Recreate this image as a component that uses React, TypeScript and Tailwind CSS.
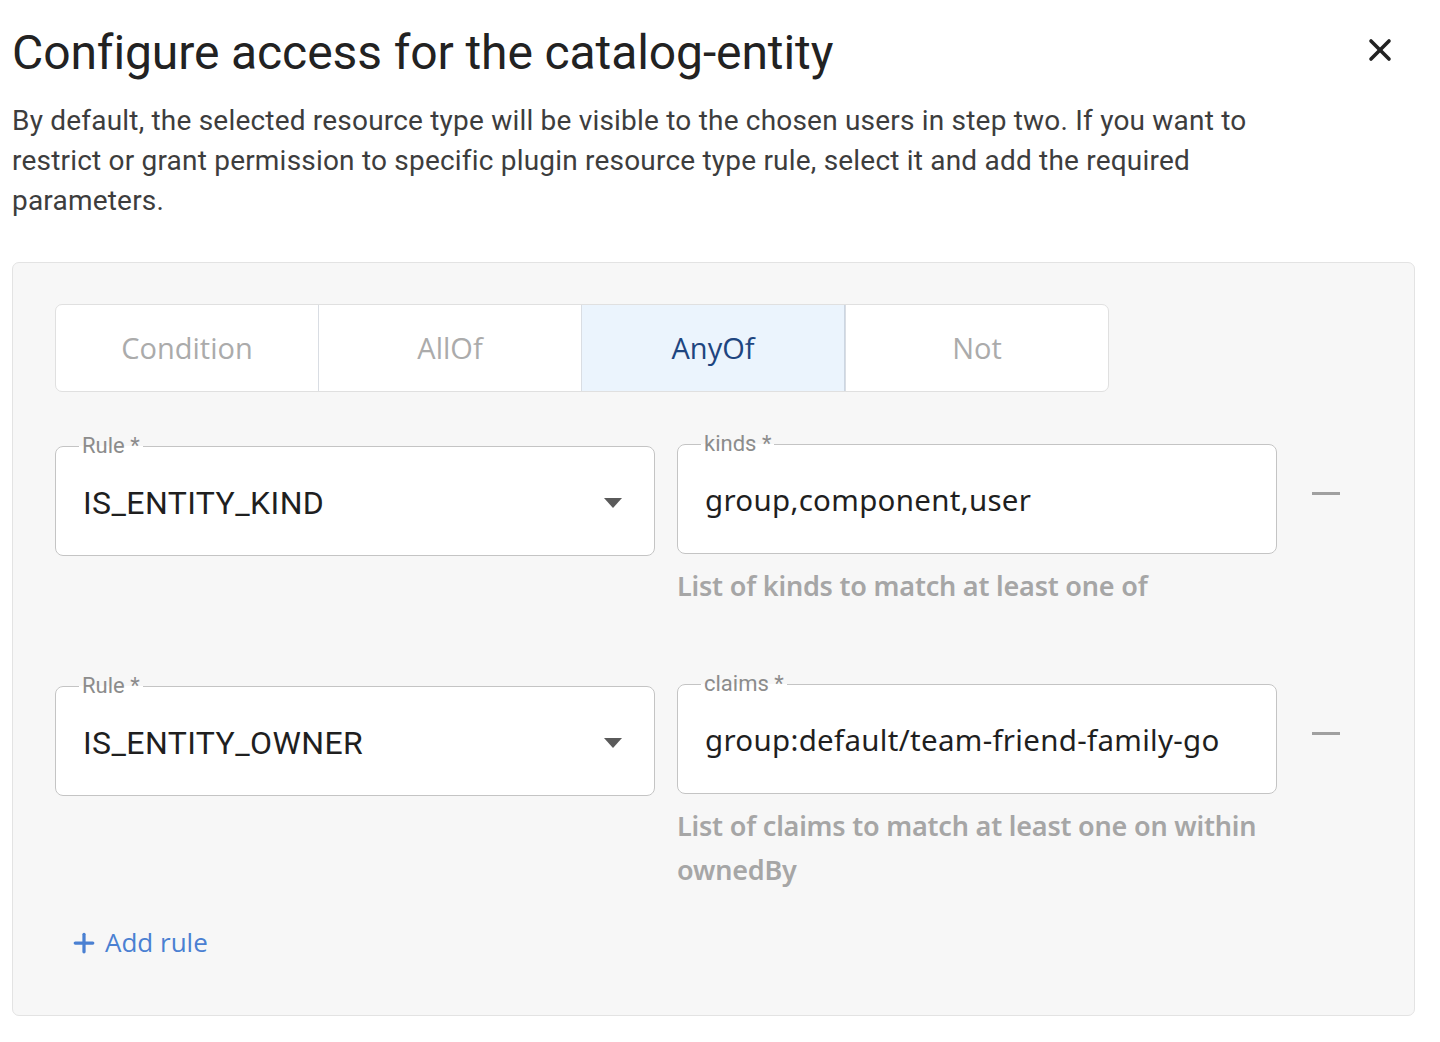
import { X, Plus } from 'lucide-react';

const tabs = ['Condition', 'AllOf', 'AnyOf', 'Not'] as const;

const rules = [
  {
    rule: 'IS_ENTITY_KIND',
    label: 'kinds',
    value: 'group,component,user',
    helper: 'List of kinds to match at least one of',
  },
  {
    rule: 'IS_ENTITY_OWNER',
    label: 'claims',
    value: 'group:default/team-friend-family-go',
    helper: 'List of claims to match at least one on within ownedBy',
  },
];

function OutlinedField({ label, value, select }: { label: string; value: string; select?: boolean }) {
  return (
    <fieldset className="w-[600px] h-[122px] border-[1.5px] border-[#c4c4c4] rounded-[8px] bg-white px-[27px] flex items-center min-w-0">
      <legend className="ml-[-4px] px-[3px] text-[22px] leading-[24px] text-[#8c8c8c] font-['Roboto',sans-serif]">
        {label} *
      </legend>
      <div className="flex-1 flex items-center justify-between -mt-[8px]">
        <span
          className={
            select
              ? "text-[32px] text-[#1f1f1f] font-['Roboto',sans-serif] tracking-[0.4px]"
              : "text-[29.5px] text-[#1f1f1f] font-['Noto_Sans','Open_Sans',sans-serif] tracking-[0.3px]"
          }
        >
          {value}
        </span>
        {select && (
          <svg width="20" height="12" viewBox="0 0 20 12" className="mr-[4px]">
            <path d="M1 1 L19 1 L10 11 Z" fill="#5a5a5a" />
          </svg>
        )}
      </div>
    </fieldset>
  );
}

export default function App() {
  return (
    <div className="w-[1440px] h-[1042px] bg-white overflow-hidden font-['Roboto',sans-serif]">
      <div className="flex items-start justify-between pl-[12px] pr-[42px] pt-[22px]">
        <h1 className="text-[48px] leading-[62px] text-[#222] tracking-[-0.1px]">
          Configure access for the catalog-entity
        </h1>
        <X className="w-[36px] h-[36px] mt-[10px] text-[#222]" strokeWidth={2.4} />
      </div>

      <p className="w-[1320px] pl-[12px] mt-[17px] text-[28px] leading-[40px] text-[#3d3d3d] tracking-[0.2px]">
        By default, the selected resource type will be visible to the chosen users in step two. If you want to
        restrict or grant permission to specific plugin resource type rule, select it and add the required
        parameters.
      </p>

      <div className="mx-[12px] mt-[41px] w-[1403px] h-[754px] bg-[#f7f7f7] border-[1.5px] border-[#e3e3e3] rounded-[7px] px-[42px] pt-[41px]">
        <div className="flex w-[1054px] h-[88px] border-[1.5px] border-[#e0e0e0] rounded-[7px] bg-white overflow-hidden font-['Open_Sans',sans-serif]">
          {tabs.map((tab, i) => (
            <div
              key={tab}
              className={`flex-1 flex items-center justify-center text-[29px] ${
                i > 0 ? 'border-l-[1.5px] border-[#d9dde3]' : ''
              } ${tab === 'AnyOf' ? 'bg-[#ebf4fd] text-[#1d4580] border-r-[1.5px] border-r-[#ccd6e2]' : 'text-[#ababab]'}`}
            >
              {tab}
            </div>
          ))}
        </div>

        <div className="mt-[42px] flex flex-col gap-[66px]">
          {rules.map((r) => (
            <div key={r.rule} className="flex items-start gap-[22px]">
              <OutlinedField label="Rule" value={r.rule} select />
              <div className="flex flex-col w-[600px]">
                <div className="-mt-[2px]">
                  <OutlinedField label={r.label} value={r.value} />
                </div>
                <p className="mt-[10px] text-[27px] leading-[44px] text-[#a6a6a6] font-semibold font-['Noto_Sans','Open_Sans',sans-serif] tracking-[-0.2px] pr-[10px]">
                  {r.helper}
                </p>
              </div>
              <div className="ml-[13px] mt-[58px] w-[28px] h-[3px] bg-[#a0a0a0]" />
            </div>
          ))}
        </div>

        <button className="mt-[31px] ml-[14px] flex items-center gap-[6px] text-[26px] text-[#4a80d2] font-['Open_Sans',sans-serif]">
          <Plus className="w-[30px] h-[30px]" strokeWidth={2.6} />
          Add rule
        </button>
      </div>
    </div>
  );
}
